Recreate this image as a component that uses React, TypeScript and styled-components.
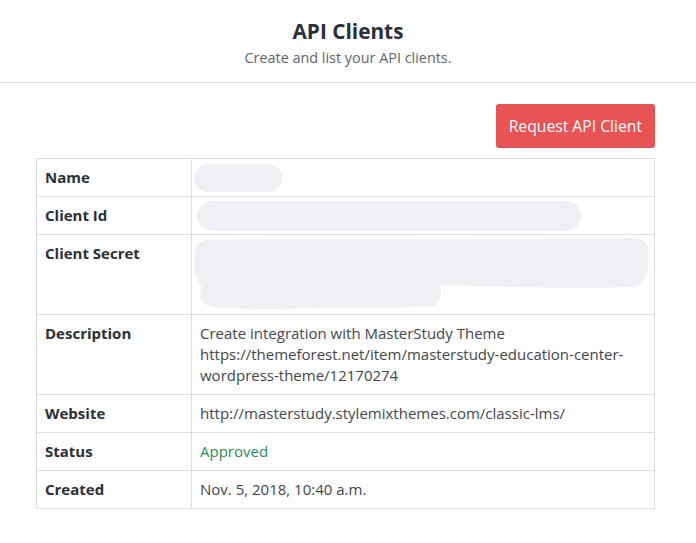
import React from "react";
import styled, { createGlobalStyle } from "styled-components";

const GlobalStyle = createGlobalStyle`
  html, body {
    margin: 0;
    padding: 0;
    background: #ffffff;
    font-family: "Open Sans", "Liberation Sans", sans-serif;
  }
`;

type Row = {
  label: string;
  value?: React.ReactNode;
  blur?: "name" | "id" | "secret";
  approved?: boolean;
};

const rows: Row[] = [
  { label: "Name", blur: "name" },
  { label: "Client Id", blur: "id" },
  { label: "Client Secret", blur: "secret" },
  {
    label: "Description",
    value: (
      <>
        Create integration with MasterStudy Theme
        <br />
        https://themeforest.net/item/masterstudy-education-center-
        <br />
        wordpress-theme/12170274
      </>
    ),
  },
  { label: "Website", value: "http://masterstudy.stylemixthemes.com/classic-lms/" },
  { label: "Status", value: "Approved", approved: true },
  { label: "Created", value: "Nov. 5, 2018, 10:40 a.m." },
];

const Blur = ({ kind }: { kind: "name" | "id" | "secret" }) => {
  if (kind === "name") return <NameBlob />;
  if (kind === "id") return <IdBlob />;
  // hand-drawn redaction over the secret
  return (
    <SecretSvg width="456" height="72" viewBox="0 0 456 72">
      <path
        d="M14 3 C120 1 300 4 440 1 C452 1 456 10 455 22 C454 34 452 46 440 50 C380 52 300 50 250 48
           L246 49 C248 55 248 66 238 69 C200 72 140 70 80 72 C30 72 10 71 8 64 C5 58 6 53 8 50
           C3 46 0 38 0 26 C0 10 4 3 14 3 Z"
        fill="#eef0f3"
      />
    </SecretSvg>
  );
};

const App: React.FC = () => {
  return (
    <>
      <GlobalStyle />
      <Page>
        <Header>
          <Title>API Clients</Title>
          <Subtitle>Create and list your API clients.</Subtitle>
        </Header>
        <Main>
          <Actions>
            <RequestButton>Request API Client</RequestButton>
          </Actions>
          <Table>
            <colgroup>
              <LabelCol />
              <col />
            </colgroup>
            <tbody>
              {rows.map((row) => (
                <tr key={row.label}>
                  <LabelCell>{row.label}</LabelCell>
                  <ValueCell $approved={row.approved}>
                    {row.blur ? <Blur kind={row.blur} /> : row.value}
                  </ValueCell>
                </tr>
              ))}
            </tbody>
          </Table>
        </Main>
      </Page>
    </>
  );
};

const Page = styled.div`
  width: 100%;
  min-height: 543px;
  background: #ffffff;
`;

const Header = styled.header`
  padding: 17px 0 14px;
  border-bottom: 1px solid #e2e2e2;
  text-align: center;
`;

const Title = styled.h1`
  margin: 0;
  font-size: 20.8px;
  line-height: 28px;
  font-weight: 700;
  color: #2a2f38;
`;

const Subtitle = styled.p`
  margin: 2px 0 0;
  font-size: 14.4px;
  line-height: 21px;
  color: #63666c;
`;

const Main = styled.main`
  padding: 21px 41px 30px 36px;
`;

const Actions = styled.div`
  display: flex;
  justify-content: flex-end;
  margin-bottom: 10px;
`;

const RequestButton = styled.button`
  height: 44px;
  padding: 0 13px;
  border: none;
  border-radius: 3px;
  background: #e85355;
  color: #ffffff;
  font-family: "Open Sans", "Liberation Sans", sans-serif;
  font-size: 15.7px;
  cursor: pointer;
`;

const Table = styled.table`
  width: 100%;
  table-layout: fixed;
  border-collapse: collapse;
  font-size: 15px;
  line-height: 21px;
`;

const LabelCol = styled.col`
  width: 155px;
`;

const LabelCell = styled.th`
  padding: 8px 8px;
  border: 1px solid #dddddd;
  text-align: left;
  vertical-align: top;
  font-weight: 700;
  color: #2b2f36;
`;

const ValueCell = styled.td<{ $approved?: boolean }>`
  padding: 8px 8px;
  border: 1px solid #dddddd;
  vertical-align: top;
  color: ${(p) => (p.$approved ? "#2e8a57" : "#43464c")};
`;

const NameBlob = styled.div`
  width: 88px;
  height: 28px;
  margin: -3px 0 -4px -6px;
  border-radius: 14px;
  background: #eef0f3;
`;

const IdBlob = styled.div`
  width: 384px;
  height: 30px;
  margin: -4px 0 -5px -3px;
  border-radius: 15px;
  background: #eef0f3;
`;

const SecretSvg = styled.svg`
  display: block;
  margin: -6px 0 -3px -6px;
`;

export default App;
